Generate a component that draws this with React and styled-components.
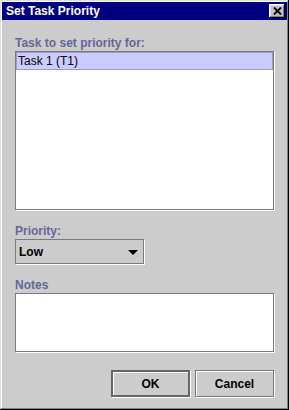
import React from 'react';
import styled, { createGlobalStyle } from 'styled-components';

const panelGrey = '#cccccc';
const titleNavy = '#000080';
const labelColor = '#666699';
const edgeDark = '#7a7a7a';

const GlobalStyle = createGlobalStyle`
  html, body {
    margin: 0;
    padding: 0;
    background: ${panelGrey};
  }
  * {
    box-sizing: border-box;
  }
`;

const Window = styled.div`
  width: 289px;
  height: 410px;
  padding: 2px;
  display: flex;
  flex-direction: column;
  background: ${panelGrey};
  font-family: 'Liberation Sans', Arial, sans-serif;
  font-size: 12px;
  box-shadow: inset -1px -1px 0 #000, inset 1px 1px 0 #dfdfdf,
    inset -2px -2px 0 #808080, inset 2px 2px 0 #ffffff;
`;

const TitleBar = styled.div`
  height: 18px;
  display: flex;
  align-items: center;
  justify-content: space-between;
  padding: 0 2px 0 4px;
  background: ${titleNavy};
`;

const Title = styled.span`
  color: #ffffff;
  font-weight: bold;
  font-size: 12px;
  line-height: 18px;
`;

const CloseButton = styled.div`
  width: 16px;
  height: 14px;
  display: flex;
  align-items: center;
  justify-content: center;
  background: #c0c0c0;
  box-shadow: inset -1px -1px 0 #000, inset 1px 1px 0 #ffffff,
    inset -2px -2px 0 #808080, inset 2px 2px 0 #dfdfdf;
`;

const Body = styled.div`
  flex: 1;
  display: flex;
  flex-direction: column;
  padding: 16px 13px 0 13px;
`;

const FieldLabel = styled.div`
  color: ${labelColor};
  font-weight: bold;
  line-height: 14px;
  height: 14px;
  margin-top: ${(p) => p.$top || 0}px;
  margin-bottom: 1px;
  white-space: nowrap;
`;

const ListBox = styled.div`
  height: 159px;
  background: #ffffff;
  border: 1px solid ${edgeDark};
  box-shadow: 1px 1px 0 #ffffff;
`;

const ListItem = styled.div`
  height: 18px;
  line-height: 16px;
  padding-left: 1px;
  color: #000;
  background: ${(p) => (p.$selected ? '#ccccff' : 'transparent')};
  border: 1px solid ${(p) => (p.$selected ? '#9999cc' : 'transparent')};
`;

const Combo = styled.div`
  width: 129px;
  height: 25px;
  display: flex;
  align-items: center;
  justify-content: space-between;
  padding: 0 5px 0 3px;
  font-weight: bold;
  color: #000;
  border: 1px solid ${edgeDark};
  box-shadow: 1px 1px 0 #ffffff;
`;

const Arrow = styled.span`
  width: 0;
  height: 0;
  margin-top: 1px;
  border-left: 5px solid transparent;
  border-right: 5px solid transparent;
  border-top: 5px solid #000;
`;

const NotesBox = styled.div`
  height: 59px;
  background: #ffffff;
  border: 1px solid ${edgeDark};
  box-shadow: 1px 1px 0 #ffffff;
`;

const ButtonRow = styled.div`
  display: flex;
  justify-content: flex-end;
  gap: 5px;
  margin-top: 18px;
`;

const DialogButton = styled.div`
  width: 79px;
  height: 27px;
  display: flex;
  align-items: center;
  justify-content: center;
  font-weight: bold;
  color: #000;
  border: ${(p) => (p.$default ? `2px solid #666666` : `1px solid ${edgeDark}`)};
  box-shadow: 1px 1px 0 #ffffff, inset 1px 1px 0 #ffffff;
`;

const App = () => {
  return (
    <>
      <GlobalStyle />
      <Window>
        <TitleBar>
          <Title>Set Task Priority</Title>
          <CloseButton>
            <svg width="9" height="8" viewBox="0 0 9 8">
              <path d="M1 0.5 L8 7.5 M8 0.5 L1 7.5" stroke="#000" strokeWidth="1.8" />
            </svg>
          </CloseButton>
        </TitleBar>
        <Body>
          <FieldLabel>Task to set priority for:</FieldLabel>
          <ListBox>
            <ListItem $selected>Task 1 (T1)</ListItem>
          </ListBox>
          <FieldLabel $top={14}>Priority:</FieldLabel>
          <Combo>
            <span>Low</span>
            <Arrow />
          </Combo>
          <FieldLabel $top={14}>Notes</FieldLabel>
          <NotesBox />
          <ButtonRow>
            <DialogButton $default>OK</DialogButton>
            <DialogButton>Cancel</DialogButton>
          </ButtonRow>
        </Body>
      </Window>
    </>
  );
};

export default App;
